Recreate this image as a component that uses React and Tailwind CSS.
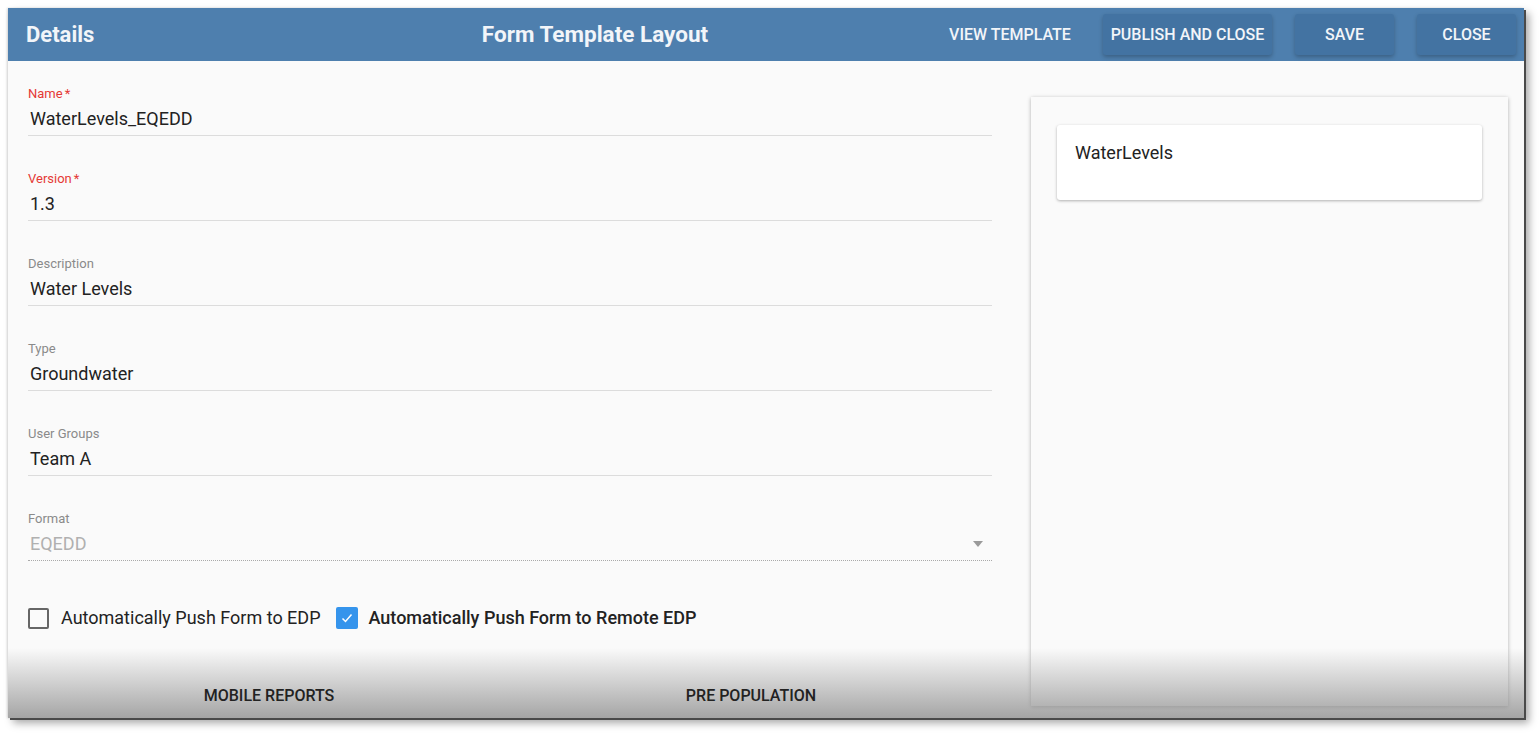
import React from "react";

const Field = ({ label, value, required, disabled }) => (
  <div className="h-[85px]">
    <div className={`text-[13px] leading-[15px] ${required ? "text-[#e53935]" : "text-[#8a8a8a]"}`}>
      {label}
      {required && <span className="ml-[2px]">*</span>}
    </div>
    <div
      className={`mt-[7px] flex items-center justify-between pl-[2px] pb-[5px] ${
        disabled ? "border-b border-dotted border-[#aaa]" : "border-b border-[#dcdcdc]"
      }`}
    >
      <span className={`text-[18px] leading-[22px] ${disabled ? "text-[#b0b0b0]" : "text-[#222]"}`}>{value}</span>
      {disabled && (
        <svg width="12" height="8" viewBox="0 0 12 8" className="mr-[8px]">
          <path d="M1 1 L11 1 L6 7 Z" fill="#9a9a9a" />
        </svg>
      )}
    </div>
  </div>
);

const HeaderButton = ({ children, raised, w }) => (
  <button
    className={`h-[41px] ${w} rounded-[3px] text-[16px] font-medium text-[#f2f5f9] ${
      raised ? "bg-[#4373a2] shadow-[0_2px_4px_rgba(0,0,0,0.25)]" : ""
    }`}
  >
    {children}
  </button>
);

export default function App() {
  return (
    <div className="min-h-screen bg-white p-[8px]" style={{ fontFamily: "Roboto, 'Liberation Sans', sans-serif" }}>
      <div className="relative flex h-[710px] w-[1516px] flex-col overflow-hidden bg-[#fafafa] shadow-[2px_2px_0_#4a4a4a,5px_5px_8px_rgba(0,0,0,0.35),-1px_0_2px_rgba(0,0,0,0.15)]">
        {/* header */}
        <div className="flex h-[53px] shrink-0 items-center bg-[#4e7fae] pl-[18px] pr-[8px]">
          <div className="w-[352px] text-[22px] font-bold text-[#f2f5f9]">Details</div>
          <div className="w-[434px] text-center text-[22.5px] font-bold text-[#f2f5f9]">Form Template Layout</div>
          <div className="ml-auto flex items-center gap-[23px]">
            <HeaderButton w="w-[140px]">VIEW TEMPLATE</HeaderButton>
            <HeaderButton raised w="w-[169px]">PUBLISH AND CLOSE</HeaderButton>
            <HeaderButton raised w="w-[99px]">SAVE</HeaderButton>
            <HeaderButton raised w="w-[99px]">CLOSE</HeaderButton>
          </div>
        </div>

        {/* body */}
        <div className="flex flex-1">
          <div className="flex w-[1000px] flex-col pl-[20px]">
            <div className="w-[964px] pt-[25px]">
              <Field label="Name" value="WaterLevels_EQEDD" required />
              <Field label="Version" value="1.3" required />
              <Field label="Description" value="Water Levels" />
              <Field label="Type" value="Groundwater" />
              <Field label="User Groups" value="Team A" />
              <Field label="Format" value="EQEDD" disabled />
              <div className="mt-[11px] flex items-center text-[18px] leading-[22px] text-[#222]">
                <span className="h-[21px] w-[21px] rounded-[2px] border-2 border-[#666]" />
                <span className="ml-[12px]">Automatically Push Form to EDP</span>
                <span className="ml-[15px] flex h-[22px] w-[22px] items-center justify-center rounded-[2px] bg-[#3594ec]">
                  <svg width="14" height="14" viewBox="0 0 14 14">
                    <path d="M2.5 7.5 L5.5 10.5 L11.5 3.5" fill="none" stroke="white" strokeWidth="1.5" />
                  </svg>
                </span>
                <span className="ml-[11px] font-medium">Automatically Push Form to Remote EDP</span>
              </div>
            </div>
            <div className="relative z-10 mt-auto flex w-[964px] pb-[13px] text-[16px] leading-[19px] font-medium text-[#222]">
              <div className="flex-1 text-center">MOBILE REPORTS</div>
              <div className="flex-1 text-center">PRE POPULATION</div>
            </div>
          </div>

          <div className="ml-[23px] mt-[36px] mb-[12px] w-[477px] bg-[#fafafa] px-[26px] pt-[28px] shadow-[0_1px_4px_rgba(0,0,0,0.3)]">
            <div className="h-[75px] rounded-[3px] bg-white px-[18px] pt-[17px] text-[18px] leading-[22px] text-[#222] shadow-[0_1px_3px_rgba(0,0,0,0.3)]">
              WaterLevels
            </div>
          </div>
        </div>

        {/* bottom fade */}
        <div className="pointer-events-none absolute inset-x-0 bottom-0 h-[70px] bg-gradient-to-b from-[rgba(250,250,250,0)] to-[rgba(150,150,150,0.85)]" />
      </div>
    </div>
  );
}
